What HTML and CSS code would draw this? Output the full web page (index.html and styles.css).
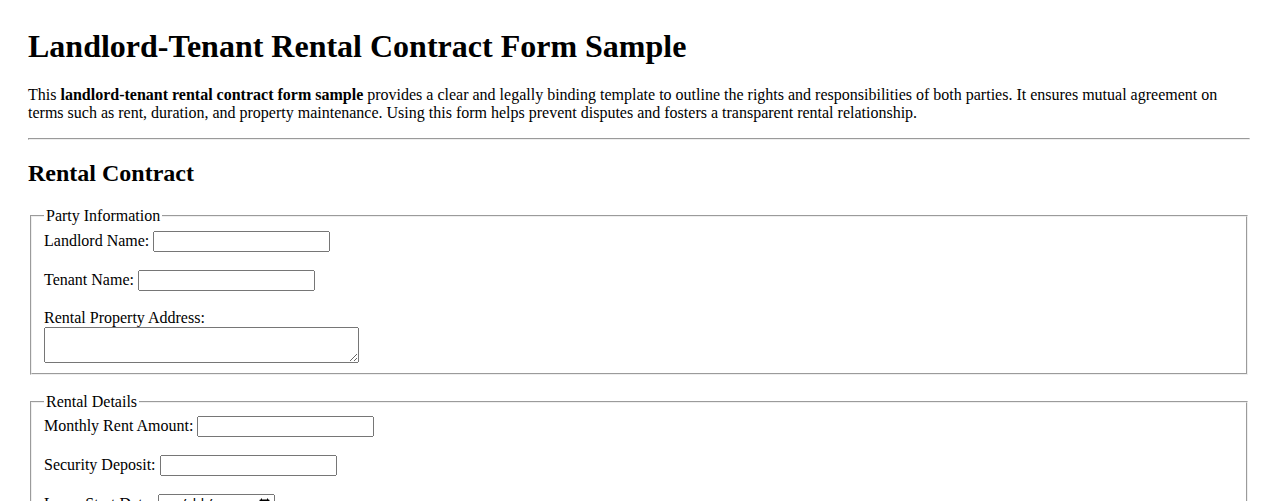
FILE: index.html
```html
<!DOCTYPE html>
<html lang="en">
<head>
<meta charset="utf-8">
<title>Landlord-Tenant Rental Contract Form Sample</title>
<link rel="stylesheet" href="styles.css">
</head>
<body>
<h1 class="title">Landlord-Tenant Rental Contract Form Sample</h1>
<p>This <strong>landlord-tenant rental contract form sample</strong> provides a clear and legally binding template to outline the rights and responsibilities of both parties. It ensures mutual agreement on terms such as rent, duration, and property maintenance. Using this form helps prevent disputes and fosters a transparent rental relationship.</p>
<hr>
<h2>Rental Contract</h2>
<form>
<fieldset>
<legend>Party Information</legend>
<label>Landlord Name: <input type="text" class="field"></label><br><br>
<label>Tenant Name: <input type="text" class="field"></label><br><br>
<label>Rental Property Address:<br><textarea class="area" rows="2"></textarea></label>
</fieldset>
<br>
<fieldset>
<legend>Rental Details</legend>
<label>Monthly Rent Amount: <input type="text" class="field"></label><br><br>
<label>Security Deposit: <input type="text" class="field"></label><br><br>
<label>Lease Start Date: <input type="date" class="date"></label><br><br>
<label>Lease End Date: <input type="date" class="date"></label>
</fieldset>
</form>
</body>
</html>
```
FILE: styles.css
```css
body {
  margin: 0;
  padding: 28px;
  font-family: "Liberation Serif", "Times New Roman", serif;
  font-size: 16px;
  color: #000;
  background: #fff;
}
.title {
  margin-top: 0;
}
.field {
  width: 177px;
  height: 21px;
  box-sizing: border-box;
}
.area {
  width: 315px;
  height: 36px;
  box-sizing: border-box;
  vertical-align: bottom;
}
.date {
  width: 117px;
  height: 21px;
  box-sizing: border-box;
}
```
